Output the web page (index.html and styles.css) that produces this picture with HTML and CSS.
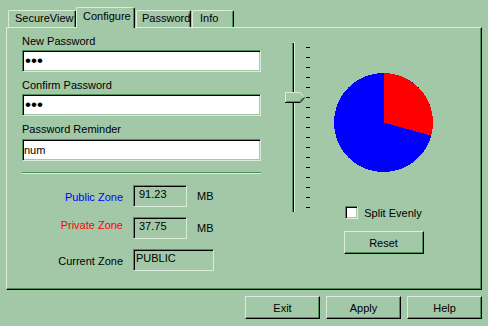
FILE: index.html
```html
<!DOCTYPE html>
<html>
<head>
<meta charset="utf-8">
<link rel="stylesheet" href="styles.css">
</head>
<body>
<div class="tabs">
  <div class="tab tab-secure">SecureView</div>
  <div class="tab tab-active">Configure</div>
  <div class="tab tab-password">Password</div>
  <div class="tab tab-info">Info</div>
</div>
<div class="panel">
  <div class="form">
    <div class="fld">
      <div class="lbl">New Password</div>
      <div class="input"><span class="dots">•••</span></div>
    </div>
    <div class="fld">
      <div class="lbl">Confirm Password</div>
      <div class="input"><span class="dots">•••</span></div>
    </div>
    <div class="fld fld-last">
      <div class="lbl">Password Reminder</div>
      <div class="input">num</div>
    </div>
    <div class="sep"></div>
    <div class="zones">
      <div class="zlbl zlbl-public">Public Zone</div>
      <div class="zbox zbox-num">91.23</div>
      <div class="unit">MB</div>
      <div class="zlbl zlbl-private">Private Zone</div>
      <div class="zbox zbox-num">37.75</div>
      <div class="unit">MB</div>
      <div class="zlbl zlbl-current">Current Zone</div>
      <div class="zbox zbox-wide">PUBLIC</div>
    </div>
  </div>
  <div class="slider">
    <div class="track"></div>
    <div class="ticks">
      <i></i><i></i><i></i><i></i><i></i><i></i><i></i><i></i><i></i>
      <i></i><i></i><i></i><i></i><i></i><i></i><i></i><i></i>
    </div>
    <svg class="thumb" width="20" height="11" viewBox="0 0 20 11">
      <polygon points="0.5,0.5 15,0.5 19.5,5.5 15,10.5 0.5,10.5" fill="#a2c8a8"/>
      <polyline points="0.5,10 0.5,0.5 15,0.5 18.5,4.5" fill="none" stroke="#dcecdc" stroke-width="1"/>
      <polyline points="1,9.5 14.6,9.5 18,5.8" fill="none" stroke="#4f8f5a" stroke-width="1"/>
      <polyline points="0,10.5 15.2,10.5 19.6,5.5" fill="none" stroke="#000" stroke-width="1"/>
    </svg>
  </div>
  <div class="piecol">
    <svg class="pie" width="99" height="99" viewBox="0 0 99 99" shape-rendering="crispEdges">
      <circle cx="49.5" cy="49.5" r="49.5" fill="#0000ff"/>
      <path d="M49.5,49.5 L49.5,0 A49.5,49.5 0 0 1 97.2,62.6 Z" fill="#ff0000"/>
    </svg>
    <div class="check"><span class="cb"></span><span>Split Evenly</span></div>
    <div class="btn btn-reset">Reset</div>
  </div>
</div>
<div class="footer">
  <div class="btn">Exit</div>
  <div class="btn">Apply</div>
  <div class="btn">Help</div>
</div>
</body>
</html>
```

FILE: styles.css
```css
:root {
  --face: #a2c8a8;
  --sh: #4f8f5a;
  --hl: #dcecdc;
}
* { box-sizing: border-box; }
html, body { margin: 0; padding: 0; }
body {
  width: 488px;
  height: 326px;
  overflow: hidden;
  background: var(--face);
  color: #000;
  font-family: "Liberation Sans", Arial, sans-serif;
  font-size: 11px;
  line-height: 14px;
}

/* tabs */
.tabs {
  display: flex;
  align-items: flex-end;
  height: 27px;
  padding-left: 8px;
}
.tab {
  height: 17px;
  padding-left: 6px;
  line-height: 15px;
  white-space: nowrap;
  border-top: 1px solid var(--hl);
  border-left: 1px solid var(--hl);
  border-right: 1px solid #000;
  border-top-left-radius: 2px;
  border-top-right-radius: 2px;
  box-shadow: inset -1px 0 0 var(--sh);
  background: var(--face);
}
.tab-secure { width: 68px; }
.tab-active {
  width: 59px;
  height: 21px;
  margin-bottom: -1px;
  line-height: 17px;
  position: relative;
  z-index: 1;
}
.tab-password { width: 55px; margin-left: 1px; padding-left: 5px; }
.tab-info { width: 42px; margin-left: 1px; padding-left: 7px; }

/* panel */
.panel {
  display: flex;
  margin: 0 6px;
  height: 263px;
  padding-left: 15px;
  border: 1px solid;
  border-color: var(--hl) #000 #000 var(--hl);
  box-shadow: inset -1px -1px 0 var(--sh);
}
.form {
  width: 239px;
  padding-top: 6px;
}
.fld {
  display: flex;
  flex-direction: column;
  gap: 2px;
  margin-bottom: 6px;
}
.fld-last {
  margin-top: 1px;
  margin-bottom: 0;
  gap: 3px;
}
.lbl { height: 14px; line-height: 14px; white-space: nowrap; }
.input {
  height: 22px;
  padding: 1px 0 0 1px;
  line-height: 18px;
  background: #fff;
  border: 1px solid;
  border-color: var(--sh) var(--hl) var(--hl) var(--sh);
  box-shadow: inset 1px 1px 0 #000, inset -1px -1px 0 var(--face);
}
.dots {
  font-size: 17px;
  line-height: 18px;
  padding-left: 1px;
}
.sep {
  margin-top: 11px;
  height: 2px;
  border-top: 1px solid var(--sh);
  border-bottom: 1px solid var(--hl);
}

/* zones */
.zones {
  display: grid;
  grid-template-columns: 101px 54px auto;
  grid-template-rows: 22px 22px 22px;
  column-gap: 10px;
  row-gap: 10px;
  margin-top: 11px;
}
.zlbl {
  justify-self: end;
  align-self: start;
  white-space: nowrap;
}
.zlbl-public { color: #0000ff; margin-top: 5px; }
.zlbl-private { color: #ff0000; margin-top: 1px; }
.zlbl-current { margin-top: 5px; }
.zbox {
  height: 22px;
  line-height: 14px;
  border: 1px solid;
  border-color: var(--sh) var(--hl) var(--hl) var(--sh);
  box-shadow: inset 1px 1px 0 #000, inset -1px -1px 0 var(--face);
  white-space: nowrap;
}
.zbox-num { padding: 1px 0 0 5px; }
.zbox-wide {
  grid-column: 2 / span 2;
  width: 81px;
  padding: 1px 0 0 2px;
}
.unit { align-self: start; margin-top: 4px; }

/* slider */
.slider {
  position: relative;
  display: flex;
  width: 25px;
  height: 170px;
  margin: 14px 0 0 24px;
}
.track {
  width: 3px;
  height: 170px;
  margin-left: 7px;
  background: #000;
  border-left: 1px solid var(--sh);
  border-right: 1px solid var(--hl);
  border-top: 1px solid var(--hl);
}
.ticks {
  display: flex;
  flex-direction: column;
  gap: 9px;
  margin-left: 11px;
  padding-top: 5px;
}
.ticks i {
  display: block;
  width: 4px;
  height: 1px;
  background: #000;
}
.thumb {
  position: absolute;
  left: 0;
  top: 50px;
}

/* pie column */
.piecol {
  display: flex;
  flex-direction: column;
  align-items: center;
  width: 99px;
  margin-left: 24px;
  padding-top: 45px;
}
.pie { display: block; }
.check {
  display: flex;
  align-items: center;
  gap: 6px;
  height: 13px;
  margin-top: 34px;
  white-space: nowrap;
}
.cb {
  width: 13px;
  height: 13px;
  background: #fff;
  border: 1px solid;
  border-color: var(--sh) var(--hl) var(--hl) var(--sh);
  box-shadow: inset 1px 1px 0 #000, inset -1px -1px 0 var(--face);
}

/* buttons */
.btn {
  display: flex;
  align-items: center;
  justify-content: center;
  width: 75px;
  height: 23px;
  border: 1px solid;
  border-color: var(--hl) #000 #000 var(--hl);
  box-shadow: inset -1px -1px 0 var(--sh);
  flex: none;
}
.btn-reset {
  width: 80px;
  margin-top: 12px;
}
.footer {
  display: flex;
  justify-content: flex-end;
  gap: 6px;
  padding: 6px 6px 0 0;
}
```
